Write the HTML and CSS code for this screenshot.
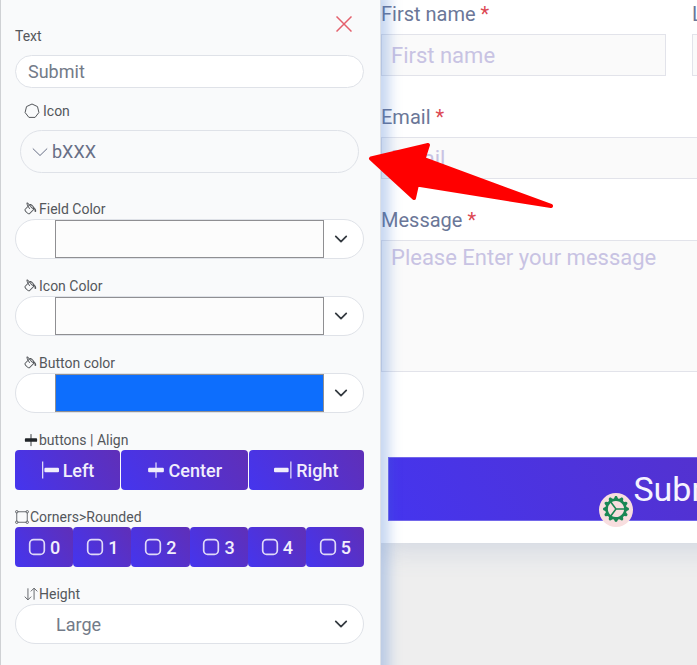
FILE: index.html
```html
<!DOCTYPE html>
<html lang="en">
<head>
    <meta charset="UTF-8">
    <meta name="viewport" content="width=device-width, initial-scale=1.0">
    <title>Form Builder</title>
    <link rel="stylesheet" href="styles.css">
</head>
<body>
    <!-- shared icons -->
    <svg class="sprite" aria-hidden="true">
        <symbol id="bucket" viewBox="0 0 16 16">
            <path d="M6.192 2.78c-.458-.677-.927-1.248-1.35-1.643a2.972 2.972 0 0 0-.71-.515c-.217-.104-.56-.205-.882-.02-.367.213-.427.63-.43.896-.003.304.064.664.173 1.044.196.687.556 1.528 1.035 2.402L.752 8.22c-.277.277-.269.656-.218.918.055.283.187.593.36.903.348.627.92 1.361 1.626 2.068.707.707 1.441 1.278 2.068 1.626.31.173.62.305.903.36.262.05.64.059.918-.218l5.615-5.615c.118.257.092.512.05.939-.03.292-.068.665-.073 1.176v.123h.003a1 1 0 0 0 1.993 0H14v-.057a1.01 1.01 0 0 0-.004-.117c-.055-1.25-.7-2.738-1.86-3.494a4.322 4.322 0 0 0-.211-.434c-.349-.626-.92-1.36-1.627-2.067-.707-.707-1.441-1.279-2.068-1.627-.31-.172-.62-.304-.903-.36-.262-.05-.64-.058-.918.219l-.217.216zM4.16 1.867c.381.356.844.922 1.311 1.632l-.704.705c-.382-.727-.66-1.402-.813-1.938a3.283 3.283 0 0 1-.131-.673c.091.061.204.15.337.274zm.394 3.965c.54.852 1.107 1.567 1.607 2.033a.5.5 0 1 0 .682-.732c-.453-.422-1.017-1.136-1.564-2.027l1.088-1.088c.054.12.115.243.183.365.349.627.92 1.361 1.627 2.068.706.707 1.44 1.278 2.068 1.626.122.068.244.13.365.183l-4.861 4.862a.571.571 0 0 1-.068-.01c-.137-.027-.342-.104-.608-.252-.524-.292-1.186-.8-1.846-1.46-.66-.66-1.168-1.32-1.46-1.846-.147-.265-.225-.47-.251-.607a.573.573 0 0 1-.01-.068l3.048-3.047zm2.87-1.935a2.44 2.44 0 0 1-.241-.561c.135.033.324.11.562.241.524.292 1.186.8 1.846 1.46.45.45.83.901 1.118 1.31a3.497 3.497 0 0 0-1.066.091 11.27 11.27 0 0 1-.76-.694c-.66-.66-1.167-1.322-1.458-1.847z"/>
        </symbol>
        <symbol id="align-center" viewBox="0 0 16 16">
            <path d="M8 1a.5.5 0 0 1 .5.5V6h-1V1.5A.5.5 0 0 1 8 1zm0 14a.5.5 0 0 1-.5-.5V10h1v4.5a.5.5 0 0 1-.5.5zM1 7a1 1 0 0 1 1-1h12a1 1 0 0 1 1 1v2a1 1 0 0 1-1 1H2a1 1 0 0 1-1-1V7z"/>
        </symbol>
        <symbol id="align-start" viewBox="0 0 16 16">
            <path d="M1 .5h1v15H1zM3 7a1 1 0 0 1 1-1h11a1 1 0 0 1 1 1v2a1 1 0 0 1-1 1H4a1 1 0 0 1-1-1V7z"/>
        </symbol>
        <symbol id="align-end" viewBox="0 0 16 16">
            <path d="M14.5 .5h1v15h-1zM13 7a1 1 0 0 0-1-1H1a1 1 0 0 0-1 1v2a1 1 0 0 0 1 1h11a1 1 0 0 0 1-1V7z"/>
        </symbol>
        <symbol id="app" viewBox="0 0 16 16">
            <rect x="1.5" y="1.5" width="13" height="13" rx="3.5"/>
        </symbol>
    </svg>

    <aside class="panel">
        <button class="close" type="button" aria-label="Close">
            <svg viewBox="0 0 16 16" width="16" height="16"><path d="M.5.5l15 15M15.5.5l-15 15"/></svg>
        </button>

        <div class="field field-text">
            <label for="btnText">Text</label>
            <input class="control" id="btnText" type="text" value="Submit">
        </div>

        <div class="field field-icon">
            <label class="indent" for="btnIcon">
                <svg class="icon heptagon" viewBox="0 0 16 16"><path d="M8 1l5.5 2.6 1.4 5.9-3.8 4.9H4.900L1.100 9.500l1.400-5.900z"/></svg>
                Icon
            </label>
            <button class="control icon-picker" id="btnIcon" type="button">
                <svg viewBox="0 0 16 16" width="16" height="16"><path d="M.8 4.500L8 11.500l7.200-7"/></svg>
                bXXX
            </button>
        </div>

        <div class="field">
            <label class="indent" for="fieldColor"><svg class="icon"><use href="#bucket"/></svg>Field Color</label>
            <input class="control select color" id="fieldColor" type="color" value="#fcfcfc">
        </div>

        <div class="field">
            <label class="indent" for="iconColor"><svg class="icon"><use href="#bucket"/></svg>Icon Color</label>
            <input class="control select color" id="iconColor" type="color" value="#fcfcfc">
        </div>

        <div class="field">
            <label class="indent" for="buttonColor"><svg class="icon"><use href="#bucket"/></svg>Button color</label>
            <input class="control select color" id="buttonColor" type="color" value="#0d6efd">
        </div>

        <div class="field" role="group" aria-labelledby="alignLabel">
            <span class="label indent" id="alignLabel"><svg class="icon dark"><use href="#align-center"/></svg>buttons | Align</span>
            <div class="btn-group align-group">
                <button type="button"><svg><use href="#align-start"/></svg>Left</button>
                <button type="button"><svg><use href="#align-center"/></svg>Center</button>
                <button type="button"><svg><use href="#align-end"/></svg>Right</button>
            </div>
        </div>

        <div class="field" role="group" aria-labelledby="cornersLabel">
            <span class="label" id="cornersLabel"><svg class="icon box" viewBox="0 0 16 16"><path d="M3 2h10M3 14h10M2 3v10M14 3v10"/><circle cx="2" cy="2" r="1.4"/><circle cx="14" cy="2" r="1.4"/><circle cx="2" cy="14" r="1.4"/><circle cx="14" cy="14" r="1.4"/></svg>Corners&gt;Rounded</span>
            <div class="btn-group corner-group">
                <button type="button"><svg><use href="#app"/></svg>0</button>
                <button type="button"><svg><use href="#app"/></svg>1</button>
                <button type="button"><svg><use href="#app"/></svg>2</button>
                <button type="button"><svg><use href="#app"/></svg>3</button>
                <button type="button"><svg><use href="#app"/></svg>4</button>
                <button type="button"><svg><use href="#app"/></svg>5</button>
            </div>
        </div>

        <div class="field">
            <label class="indent" for="btnHeight"><svg class="icon arrows" viewBox="0 0 16 16"><path d="M4.5 1.5v13M.8 11l3.700 3.700L8.200 11M11.500 14.500v-13M7.800 5l3.700-3.700L15.200 5"/></svg>Height</label>
            <select class="control select" id="btnHeight">
                <option>Default</option>
                <option selected>Large</option>
            </select>
        </div>
    </aside>

    <main class="preview">
        <form class="card">
            <div class="form-item">
                <label for="firstName">First name <span class="required">*</span></label>
                <input id="firstName" type="text" placeholder="First name">
            </div>
            <div class="form-item">
                <label for="lastName">Last name <span class="required">*</span></label>
                <input id="lastName" type="text" placeholder="Last name">
            </div>
            <div class="form-item wide">
                <label for="email">Email <span class="required">*</span></label>
                <input id="email" type="email" placeholder="Email">
            </div>
            <div class="form-item wide">
                <label for="message">Message <span class="required">*</span></label>
                <textarea id="message" placeholder="Please Enter your message"></textarea>
            </div>
            <div class="submit-row wide">
                <button class="submit" type="button">Submit</button>
                <button class="gear" type="button" aria-label="Settings">
                    <svg viewBox="0 0 16 16" width="26" height="26"><path d="M7.068.727c.243-.97 1.62-.97 1.864 0l.071.286a.96.96 0 0 0 1.622.434l.205-.211c.695-.719 1.888-.03 1.613.931l-.08.284a.96.96 0 0 0 1.187 1.187l.283-.081c.96-.275 1.65.918.931 1.613l-.211.205a.96.96 0 0 0 .434 1.622l.286.071c.97.243.97 1.62 0 1.864l-.286.071a.96.96 0 0 0-.434 1.622l.211.205c.719.695.03 1.888-.931 1.613l-.284-.08a.96.96 0 0 0-1.187 1.187l.081.283c.275.96-.918 1.65-1.613.931l-.205-.211a.96.96 0 0 0-1.622.434l-.071.286c-.243.97-1.62.97-1.864 0l-.071-.286a.96.96 0 0 0-1.622-.434l-.205.211c-.695.719-1.888.03-1.613-.931l.08-.284a.96.96 0 0 0-1.186-1.187l-.284.081c-.96.275-1.65-.918-.931-1.613l.211-.205a.96.96 0 0 0-.434-1.622l-.286-.071c-.97-.243-.97-1.62 0-1.864l.286-.071a.96.96 0 0 0 .434-1.622l-.211-.205c-.719-.695-.03-1.888.931-1.613l.284.08a.96.96 0 0 0 1.187-1.186l-.081-.284c-.275-.96.918-1.65 1.613-.931l.205.211a.96.96 0 0 0 1.622-.434l.071-.286zM12.973 8.5H8.25l-2.834 3.779A4.998 4.998 0 0 0 12.973 8.5zm0-1a4.998 4.998 0 0 0-7.557-3.779l2.834 3.78h4.723zM4.617 4.322A4.984 4.984 0 0 0 3.002 8c0 1.455.622 2.765 1.615 3.678L7.375 8 4.617 4.322z"/></svg>
                </button>
            </div>
        </form>
    </main>

    <!-- arrow pointing at the icon picker -->
    <svg class="pointer" viewBox="368 141 188 70" aria-hidden="true">
        <path d="M371 158.5L428 145l-4.500 14L551 206l-134-21.500-3 13.500z"/>
    </svg>
</body>
</html>
```

FILE: styles.css
```css
* {
    box-sizing: border-box;
}

body {
    display: flex;
    position: relative;
    min-height: 100vh;
    margin: 0;
    overflow: hidden;
    background-color: #eee;
    font-family: Roboto, sans-serif;
}

button,
input,
select,
textarea {
    margin: 0;
    font-family: inherit;
}

.sprite {
    position: absolute;
    width: 0;
    height: 0;
}

/* settings panel */
.panel {
    position: relative;
    z-index: 1;
    flex: 0 0 381px;
    padding: 26px 16px 20px 14px;
    border-left: 1px solid #cfd1d4;
    border-right: 1px solid #dde1e8;
    background-color: #f9fafb;
    box-shadow: 0 0 12px 8px rgba(60, 115, 205, 0.3);
}

.close {
    position: absolute;
    top: 16px;
    right: 28px;
    display: flex;
    padding: 0;
    border: 0;
    background: none;
}

.close svg {
    fill: none;
    stroke: #e4606d;
    stroke-width: 1.5;
}

.field {
    margin-bottom: 17px;
}

.field label,
.label {
    display: flex;
    align-items: center;
    height: 20px;
    font-size: 14px;
    line-height: 20px;
    color: #54575b;
}

.field .indent {
    padding-left: 9px;
}

.icon {
    width: 14px;
    height: 14px;
    margin-right: 1px;
    fill: #54575b;
}

.icon.dark {
    fill: #212529;
}

.heptagon,
.box,
.arrows {
    fill: none;
    stroke: #54575b;
    stroke-width: 1;
}

.heptagon {
    width: 16px;
    height: 16px;
    margin-right: 3px;
}

.control {
    display: block;
    width: 100%;
    height: 40px;
    border: 1px solid #dfe2e8;
    border-radius: 20px;
    background-color: #fff;
    font-size: 18px;
    color: #737b88;
}

.field-text {
    margin-bottom: 13px;
}

.field-text label,
.field-icon label {
    margin-bottom: 9px;
}

.field-text .control {
    height: 33px;
    padding: 0 12px;
}

.field-icon {
    padding-right: 5px;
    margin-bottom: 26px;
}

.icon-picker {
    display: flex;
    align-items: center;
    gap: 4px;
    width: calc(100% - 5px);
    height: 43px;
    margin-left: 5px;
    padding: 0 11px;
    border-radius: 22px;
    background: none;
    color: #686f86;
}

.icon-picker svg {
    fill: none;
    stroke: #686f86;
    stroke-width: 1;
}

.select {
    padding: 0 40px;
    appearance: none;
    background: #fff url("data:image/svg+xml,%3Csvg xmlns='http://www.w3.org/2000/svg' viewBox='0 0 16 16'%3E%3Cpath fill='none' stroke='%23343a40' stroke-linecap='round' stroke-linejoin='round' stroke-width='2' d='M2 5l6 6 6-6'/%3E%3C/svg%3E") no-repeat right 15px center / 14px 14px;
}

.color {
    padding: 0 39px;
}

.color::-webkit-color-swatch-wrapper {
    padding: 0;
}

.color::-webkit-color-swatch {
    border: 1px solid #8f8f92;
    border-radius: 0;
}

.btn-group {
    display: flex;
}

.btn-group button {
    display: flex;
    flex: 1 1 auto;
    align-items: center;
    justify-content: center;
    gap: 4px;
    height: 40px;
    padding: 0;
    border: 0;
    border-radius: 4px;
    background: linear-gradient(60deg, #4535ee, #5f2fb8);
    font-size: 18px;
    font-weight: 500;
    color: #f1eefc;
}

.btn-group svg {
    width: 18px;
    height: 18px;
    fill: #f1eefc;
}

.align-group {
    gap: 1px;
}

.corner-group button {
    flex: 1 1 0;
}

.corner-group svg {
    fill: none;
    stroke: #e0daf8;
    stroke-width: 1.5;
}

/* form preview */
.preview {
    flex: 1;
    min-width: 0;
    overflow: hidden;
}

.card {
    display: grid;
    grid-template-columns: 1fr 1fr;
    gap: 29px 26px;
    min-width: 596px;
    padding: 2px 0 22px;
    background-color: #fff;
    box-shadow: 0 4px 28px rgba(90, 120, 175, 0.22);
}

.wide {
    grid-column: span 2;
}

.form-item label {
    display: block;
    margin-bottom: 8px;
    font-size: 20px;
    line-height: 24px;
    color: #6b7798;
}

.required {
    color: #dc4853;
}

.form-item input,
.form-item textarea {
    display: block;
    width: 100%;
    height: 42px;
    padding: 0 9px;
    border: 1px solid #e2e3ea;
    border-radius: 0;
    background-color: #fafafa;
    font-size: 22px;
    color: #6b7798;
}

.form-item textarea {
    height: 132px;
    padding: 4px 9px;
    resize: none;
}

.form-item ::placeholder {
    color: #c8c3e3;
}

.submit-row {
    position: relative;
    margin: 56px 7px 0;
}

.submit {
    display: block;
    width: 100%;
    height: 64px;
    padding: 0 0 0 16px;
    border: 1px solid #7367ea;
    background: linear-gradient(60deg, #4535ee, #5f2fb8);
    font-size: 34px;
    color: #f5f3ff;
}

.gear {
    position: absolute;
    top: 36px;
    left: 211px;
    display: flex;
    align-items: center;
    justify-content: center;
    width: 34px;
    height: 34px;
    padding: 0 0 2px;
    border: 0;
    border-radius: 50%;
    background-color: #f8dedf;
}

.gear svg {
    fill: #198754;
}

.pointer {
    position: absolute;
    top: 141px;
    left: 368px;
    z-index: 2;
    width: 188px;
    height: 70px;
    fill: #f00;
    stroke: #f00;
    stroke-width: 4;
    stroke-linejoin: round;
}
```
